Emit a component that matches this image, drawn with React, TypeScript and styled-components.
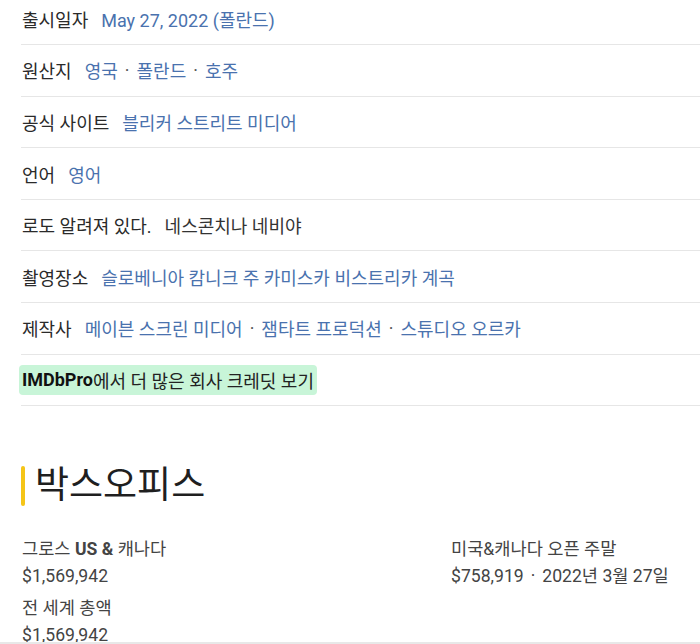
import React from "react";
import styled, { createGlobalStyle } from "styled-components";

const Global = createGlobalStyle`
  html, body { margin: 0; padding: 0; background: #ffffff; }
  body {
    font-family: Roboto, "Noto Sans CJK KR", "Noto Sans", sans-serif;
    color: #222;
    overflow: hidden;
  }
`;

const Page = styled.div`
  width: 700px;
  height: 644px;
  overflow: hidden;
  position: relative;
`;

const List = styled.ul`
  list-style: none;
  margin: -6.5px 0 0 21px;
  padding: 0;
`;

const Row = styled.li`
  display: flex;
  align-items: center;
  height: 51.6px;
  box-sizing: border-box;
  border-bottom: 1px solid #e6e6e6;
  padding-left: 1px;
  font-size: 18px;
`;

const Label = styled.span`
  color: #2a2a2a;
  margin-right: 13px;
  white-space: nowrap;
`;

const Values = styled.span`
  display: flex;
  align-items: center;
  white-space: nowrap;
`;

const Link = styled.a<{ $plain?: boolean }>`
  color: ${(p) => (p.$plain ? "#333" : "#4a72ae")};
  text-decoration: none;
`;

const Dot = styled.span`
  color: #555;
  margin: 0 7px;
`;

const ProBadge = styled.span`
  display: inline-flex;
  align-items: center;
  background: #c8f5d8;
  border-radius: 4px;
  padding: 2px 3px;
  margin-left: -3px;
  color: #222;
`;

const ProBold = styled.b`
  font-weight: 700;
  color: #111;
`;

const Section = styled.section`
  padding: 60px 0 0 21px;
`;

const Heading = styled.h2`
  display: flex;
  align-items: center;
  margin: 0;
  font-weight: 400;
  font-size: 37px;
  color: #1f1f1f;
  line-height: 40px;
  &::before {
    content: "";
    display: block;
    width: 4px;
    height: 40px;
    border-radius: 2px;
    background: #f5c518;
    margin-right: 10px;
  }
`;

const Grid = styled.div`
  display: grid;
  grid-template-columns: 429px 1fr;
  margin-top: 30px;
  padding-left: 1px;
`;

const Column = styled.div`
  display: flex;
  flex-direction: column;
`;

const Stat = styled.div`
  display: flex;
  flex-direction: column;
  margin-bottom: 5px;
`;

const StatLabel = styled.span`
  font-size: 17.6px;
  line-height: 27px;
  color: #444;
`;

const StatValue = styled.span`
  font-size: 17.6px;
  line-height: 27px;
  color: #444;
`;

const StatDot = styled.span`
  margin: 0 7px;
`;

const BottomRule = styled.div`
  position: absolute;
  left: 0;
  right: 0;
  top: 642px;
  height: 2px;
  background: #e8e8e8;
`;

type Item = { label: string; values: string[]; plain?: boolean };

const items: Item[] = [
  { label: "출시일자", values: ["May 27, 2022 (폴란드)"] },
  { label: "원산지", values: ["영국", "폴란드", "호주"] },
  { label: "공식 사이트", values: ["블리커 스트리트 미디어"] },
  { label: "언어", values: ["영어"] },
  { label: "로도 알려져 있다.", values: ["네스콘치나 네비야"], plain: true },
  { label: "촬영장소", values: ["슬로베니아 캄니크 주 카미스카 비스트리카 계곡"] },
  { label: "제작사", values: ["메이븐 스크린 미디어", "잼타트 프로덕션", "스튜디오 오르카"] },
];

export default function App() {
  return (
    <Page>
      <Global />
      <List>
        {items.map((it) => (
          <Row key={it.label}>
            <Label>{it.label}</Label>
            <Values>
              {it.values.map((v, i) => (
                <React.Fragment key={v}>
                  {i > 0 && <Dot>·</Dot>}
                  <Link $plain={it.plain}>{v}</Link>
                </React.Fragment>
              ))}
            </Values>
          </Row>
        ))}
        <Row>
          <ProBadge>
            <ProBold>IMDbPro</ProBold>에서 더 많은 회사 크레딧 보기
          </ProBadge>
        </Row>
      </List>
      <Section>
        <Heading>박스오피스</Heading>
        <Grid>
          <Column>
            <Stat>
              <StatLabel>
                그로스 <b>US &amp;</b> 캐나다
              </StatLabel>
              <StatValue>$1,569,942</StatValue>
            </Stat>
            <Stat>
              <StatLabel>전 세계 총액</StatLabel>
              <StatValue>$1,569,942</StatValue>
            </Stat>
          </Column>
          <Column>
            <Stat>
              <StatLabel>미국&amp;캐나다 오픈 주말</StatLabel>
              <StatValue>
                $758,919<StatDot>·</StatDot>2022년 3월 27일
              </StatValue>
            </Stat>
          </Column>
        </Grid>
      </Section>
      <BottomRule />
    </Page>
  );
}
